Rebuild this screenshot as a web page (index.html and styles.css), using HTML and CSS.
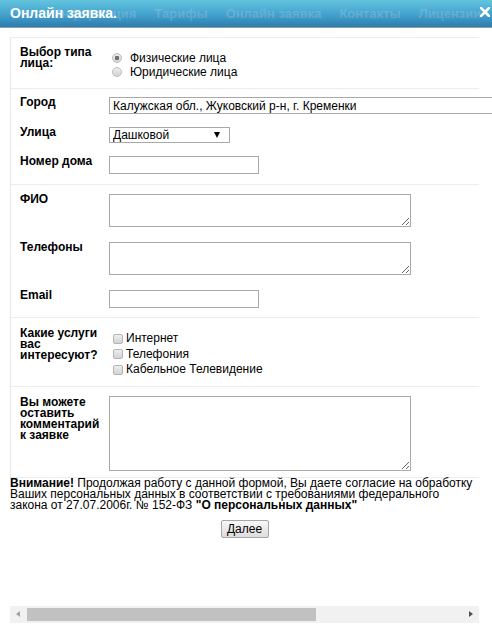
FILE: index.html
```html
<!DOCTYPE html>
<html lang="ru">
<head>
  <meta charset="UTF-8" />
  <title>Онлайн заявка</title>
  <link rel="stylesheet" href="styles.css">
</head>
<body>
  <!-- Dialog title bar (site menu shows through underneath) -->
  <div class="modal-head">
    <div class="site-menu">
      <span>Информация</span>
      <span>Тарифы</span>
      <span>Онлайн заявка</span>
      <span>Контакты</span>
      <span>Лицензии</span>
    </div>
    <h1 class="modal-title">Онлайн заявка.</h1>
    <a class="modal-close" href="#">
      <svg width="10" height="10" viewBox="0 0 10 10">
        <path d="M1 1 L9 9 M9 1 L1 9" stroke="#fff" stroke-width="2.6" stroke-linecap="square" />
      </svg>
    </a>
  </div>

  <form class="order-form">
    <div class="order-box">
      <div class="section sect-type">
        <div class="row">
          <div class="label">Выбор типа лица:</div>
          <div class="choices">
            <label class="choice"><input type="radio" name="face" checked> Физические лица</label>
            <label class="choice"><input type="radio" name="face"> Юридические лица</label>
          </div>
        </div>
      </div>

      <div class="section sect-address">
        <div class="row">
          <div class="label">Город</div>
          <input type="text" class="field field-city" value="Калужская обл., Жуковский р-н, г. Кременки">
        </div>
        <div class="row row-street">
          <div class="label">Улица</div>
          <span class="select-wrap">
            <select class="field field-street">
              <option>Дашковой</option>
            </select>
          </span>
        </div>
        <div class="row row-house">
          <div class="label">Номер дома</div>
          <input type="text" class="field field-short">
        </div>
      </div>

      <div class="section sect-contacts">
        <div class="row">
          <div class="label">ФИО</div>
          <textarea class="field field-area"></textarea>
        </div>
        <div class="row row-gap">
          <div class="label">Телефоны</div>
          <textarea class="field field-area"></textarea>
        </div>
        <div class="row row-gap">
          <div class="label">Email</div>
          <input type="text" class="field field-short">
        </div>
      </div>

      <div class="section sect-services">
        <div class="row">
          <div class="label">Какие услуги вас интересуют?</div>
          <div class="checks">
            <label class="check"><input type="checkbox"> Интернет</label>
            <label class="check"><input type="checkbox"> Телефония</label>
            <label class="check"><input type="checkbox"> Кабельное Телевидение</label>
          </div>
        </div>
      </div>

      <div class="section sect-comment">
        <div class="row">
          <div class="label">Вы можете оставить комментарий к заявке</div>
          <textarea class="field field-area field-comment"></textarea>
        </div>
      </div>
    </div>

    <p class="notice"><b>Внимание!</b> Продолжая работу с данной формой, Вы даете согласие на обработку Ваших персональных данных в соответствии с требованиями федерального закона от 27.07.2006г. № 152-ФЗ <b>"О персональных данных"</b></p>

    <div class="actions">
      <button type="button" class="btn-next">Далее</button>
    </div>
  </form>

  <!-- horizontal scrollbar of the frame -->
  <div class="hscroll">
    <span class="hs-arrow hs-left"></span>
    <span class="hs-thumb"></span>
    <span class="hs-arrow hs-right"></span>
  </div>
</body>
</html>
```

FILE: styles.css
```css
body {
  margin: 0;
  width: 492px;
  height: 627px;
  overflow: hidden;
  background: #fff;
  color: #000;
  font-family: "Liberation Sans", Arial, sans-serif;
  font-size: 12px;
  display: flex;
  flex-direction: column;
}

/* Title bar */
.modal-head {
  position: relative;
  height: 27px;
  flex: none;
  background: linear-gradient(to bottom, #63c4de 0%, #46a4cf 50%, #2c7dad 100%);
  border-bottom: 1px solid #8d9ca6;
  overflow: hidden;
}

.site-menu {
  position: absolute;
  left: 52px;
  top: 0;
  display: flex;
  gap: 18px;
  font-size: 13px;
  line-height: 27px;
  font-weight: bold;
  white-space: nowrap;
  color: rgba(255, 255, 255, 0.17);
}

.modal-title {
  position: relative;
  margin: 0;
  padding-left: 10px;
  font-size: 14px;
  line-height: 27px;
  font-weight: bold;
  color: #fff;
}

.modal-close {
  position: absolute;
  right: 2px;
  top: 7px;
  width: 10px;
  height: 10px;
  display: block;
}

.modal-close svg { display: block; }

/* Form */
.order-form {
  padding: 9px 0 0 10px;
}

.order-box {
  width: 468px;
  border-left: 1px solid #e6e6e6;
  border-top: 1px solid #ececec;
}

.section {
  padding-left: 9px;
  border-bottom: 1px solid #ececec;
}

.row {
  display: flex;
  align-items: flex-start;
}

.label {
  width: 84px;
  margin-right: 5px;
  flex: none;
  font-size: 12px;
  line-height: 11px;
  font-weight: bold;
}

.sect-type { padding-top: 9px; padding-bottom: 9px; }
.sect-address { padding-top: 8px; padding-bottom: 10px; }
.sect-contacts { padding-top: 9px; padding-bottom: 9px; }
.sect-services { padding-top: 10px; padding-bottom: 8.5px; }
.sect-comment { padding-top: 9px; padding-bottom: 6px; }

.row-street,
.row-house { margin-top: 13px; }
.row-gap { margin-top: 15px; }
.sect-comment .label { padding-top: 1px; }

.choices { margin-top: 4px; }

.choice {
  display: flex;
  align-items: center;
  height: 14px;
  line-height: 14px;
}

.choice input {
  appearance: none;
  width: 10px;
  height: 10px;
  margin: 0 8px 0 3px;
  border: 1px solid #bdbdbd;
  border-radius: 50%;
  background: linear-gradient(to bottom, #ececec, #d4d4d4);
}

.choice input:checked {
  background: radial-gradient(circle, #6f6f6f 0 2px, transparent 2.5px),
              linear-gradient(to bottom, #ececec, #d4d4d4);
}

.checks { margin-top: 3px; }

.check {
  display: flex;
  align-items: center;
  height: 15.5px;
  line-height: 15.5px;
}

.check input {
  appearance: none;
  width: 10px;
  height: 10px;
  margin: 0 3px 0 4px;
  border: 1px solid #b4b4b4;
  border-radius: 2px;
  background: linear-gradient(to bottom, #eeeeee, #d3d3d3);
}

.field {
  box-sizing: border-box;
  border: 1px solid #a9a9a9;
  border-radius: 0;
  background: #fff;
  font-family: "Liberation Sans", Arial, sans-serif;
  font-size: 12px;
  color: #000;
  padding: 0 3px;
  margin: 0;
  outline: none;
}

.field-city {
  flex: none;
  width: 400px;
  height: 17px;
}

.field-short {
  width: 150px;
  height: 18px;
}

.field-area {
  display: block;
  width: 302px;
  height: 33px;
  padding: 2px 3px;
}

.field-comment { height: 75px; }

.select-wrap {
  position: relative;
  display: block;
}

.field-street {
  appearance: none;
  display: block;
  width: 121px;
  height: 16px;
  line-height: 14px;
}

/* dropdown arrow */
.select-wrap::after {
  content: "";
  position: absolute;
  right: 10px;
  top: 5px;
  border-left: 3px solid transparent;
  border-right: 3px solid transparent;
  border-top: 6px solid #000;
}

.notice {
  width: 464px;
  margin: 0;
  font-size: 12px;
  line-height: 11px;
}

.actions {
  width: 469px;
  margin-top: 9px;
  text-align: center;
}

.btn-next {
  width: 48px;
  height: 18px;
  padding: 0;
  border: 1px solid #a6a6a6;
  border-radius: 2px;
  background: linear-gradient(to bottom, #f7f7f7, #dddddd);
  font-family: "Liberation Sans", Arial, sans-serif;
  font-size: 12px;
  color: #000;
}

/* Scrollbar */
.hscroll {
  margin: auto 0 4px 10px;
  width: 469px;
  height: 17px;
  flex: none;
  display: flex;
  align-items: center;
  background: #f1f1f1;
}

.hs-arrow {
  width: 17px;
  height: 17px;
  flex: none;
  position: relative;
}

.hs-arrow::before {
  content: "";
  position: absolute;
  top: 5px;
  border-top: 3.5px solid transparent;
  border-bottom: 3.5px solid transparent;
}

.hs-left::before {
  left: 6px;
  border-right: 4px solid #a3a3a3;
}

.hs-right { margin-left: auto; }

.hs-right::before {
  left: 7px;
  border-left: 4px solid #505050;
}

.hs-thumb {
  width: 289px;
  height: 13px;
  background: #c1c1c1;
}
```
